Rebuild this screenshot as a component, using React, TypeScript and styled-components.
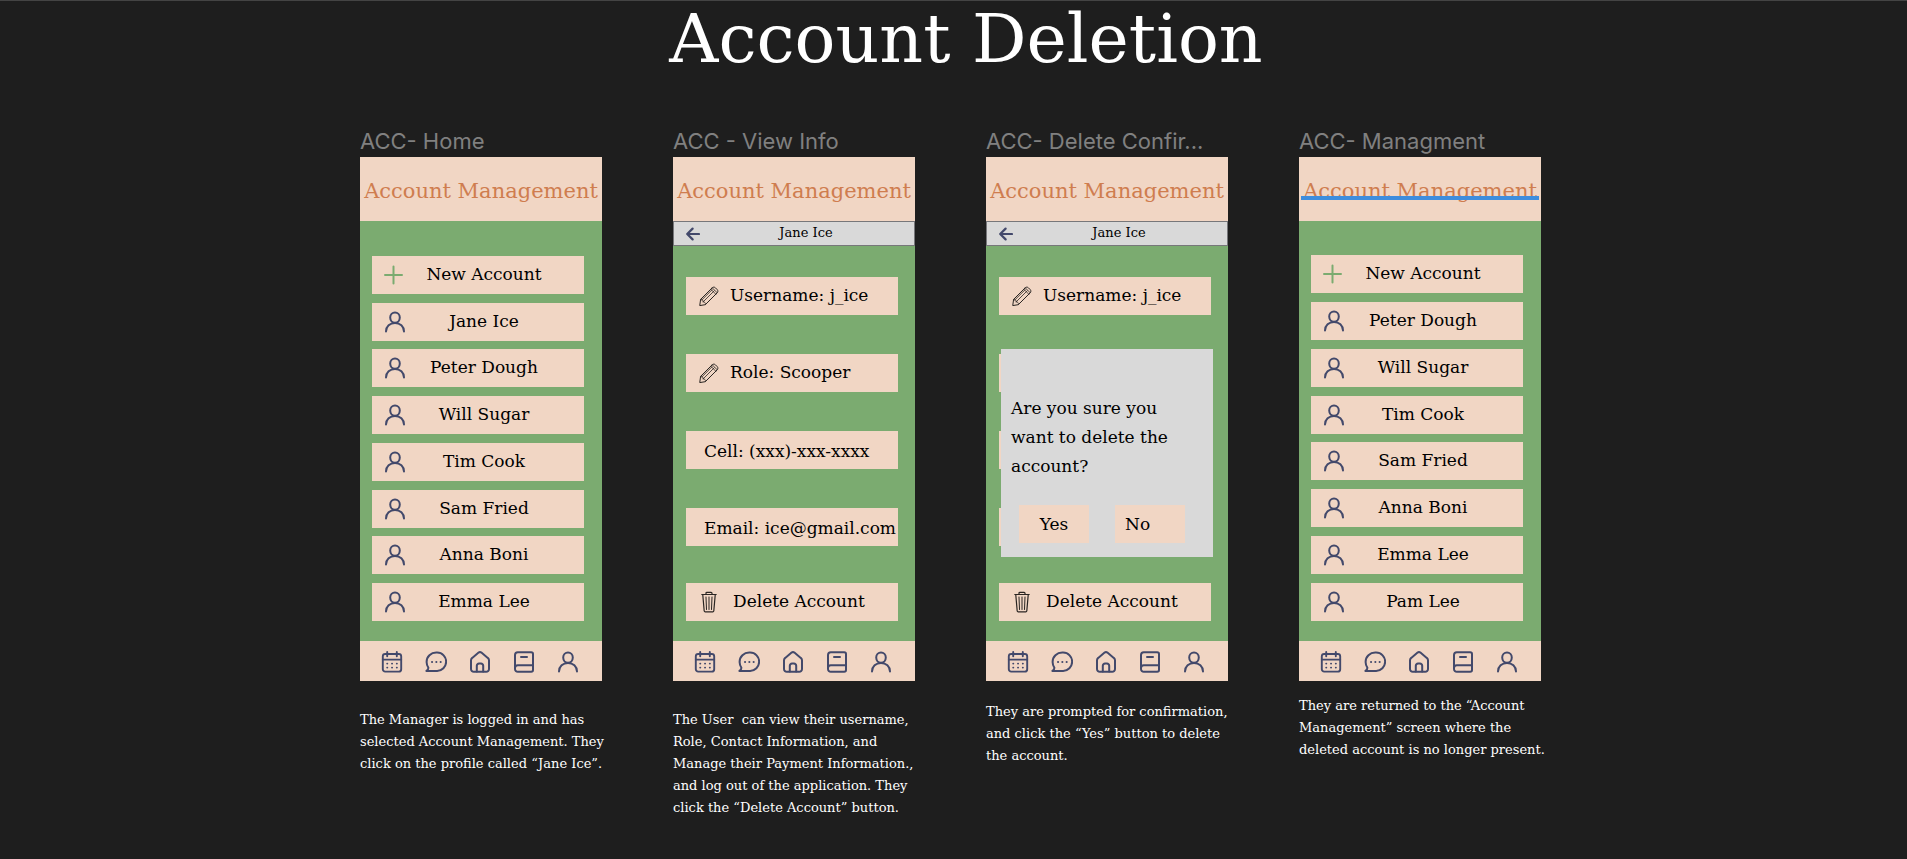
import React from 'react';
import styled, { createGlobalStyle, css } from 'styled-components';

const Global = createGlobalStyle`
  *, *::before, *::after { box-sizing: border-box; }
  body {
    margin: 0;
    background: #1e1e1e;
    color: #fff;
    font-family: 'DejaVu Serif', serif;
  }
  button { font: inherit; color: inherit; border: 0; padding: 0; background: none; cursor: pointer; }
  h1, h2, h3, p { margin: 0; font-weight: 400; }
`;

const peach = '#f1d6c4';
const green = '#7bab70';
const grey = '#d9d9d9';
const navy = '#43496b';

const Page = styled.main`
  min-height: 100vh;
  border-top: 1px solid #444;
  display: flex;
  flex-direction: column;
  align-items: center;
  overflow: hidden;
`;

const Title = styled.h1`
  padding-left: 25px;
  font-size: 68px;
  line-height: 76px;
  white-space: nowrap;
`;

const Board = styled.div`
  display: grid;
  grid-template-columns: repeat(4, 242px);
  gap: 71px;
  margin-top: 52px;
  padding: 0 6px 24px 0;
`;

const Flow = styled.section`
  display: flex;
  flex-direction: column;
  min-width: 0;
`;

const FrameLabel = styled.h2`
  margin-bottom: 4px;
  font-family: Inter, sans-serif;
  font-size: 22px;
  line-height: 24px;
  color: #808080;
  white-space: nowrap;
`;

const Phone = styled.article`
  display: flex;
  flex-direction: column;
  height: 524px;
  background: ${green};
  color: #000;
`;

const Header = styled.header`
  display: flex;
  align-items: center;
  justify-content: center;
  flex: none;
  height: 64px;
  background: ${peach};
`;

const HeaderText = styled.h3<{ $marked?: boolean }>`
  position: relative;
  font-size: 21px;
  line-height: 28px;
  padding-top: 4px;
  white-space: nowrap;
  color: #cf7d4f;
  ${p => p.$marked && css`
    &::after {
      content: '';
      position: absolute;
      inset: auto -2px 5px -2px;
      height: 4px;
      background: #3e8ddd;
    }
  `}
`;

const BackBar = styled.div`
  display: grid;
  grid-template-columns: 24px 1fr;
  align-items: center;
  flex: none;
  height: 25px;
  padding: 0 12px;
  border: 1px solid #77777a;
  background: ${grey};
  font-size: 13px;
  line-height: 16px;
  text-align: center;
  svg { display: block; }
`;

const BarName = styled.span`
  padding-bottom: 2px;
`;

const Accounts = styled.div<{ $top: number }>`
  flex: 1;
  display: flex;
  flex-direction: column;
  justify-content: space-between;
  padding: ${p => p.$top}px 18px 20px 12px;
`;

const AccountRow = styled.button`
  && {
    display: grid;
    grid-template-columns: 46px 1fr;
    align-items: center;
    justify-items: center;
    height: 38px;
    padding-right: 34px;
    background: ${peach};
    font-size: 17px;
    line-height: 24px;
    white-space: nowrap;
  }
`;

const RowText = styled.span`
  padding-bottom: 2px;
`;

const Details = styled.div`
  position: relative;
  flex: 1;
  display: flex;
  flex-direction: column;
  padding: 31px 17px 20px 13px;
`;

const Fields = styled.div`
  display: flex;
  flex-direction: column;
  gap: 39px;
`;

const fieldBox = css`
  display: flex;
  align-items: center;
  height: 38px;
  background: ${peach};
  font-size: 17px;
  line-height: 24px;
  white-space: nowrap;
`;

const Field = styled.div<{ $plain?: boolean }>`
  ${fieldBox}
  gap: 11px;
  padding: ${p => (p.$plain ? '2px 0 0 18px' : '0 0 0 13px')};
`;

const DeleteRow = styled.button`
  && {
    ${fieldBox}
    gap: 16px;
    margin-top: auto;
    padding-left: 15px;
  }
`;

const Dialog = styled.div`
  position: absolute;
  top: 103px;
  left: 15px;
  width: 212px;
  height: 208px;
  display: flex;
  flex-direction: column;
  justify-content: flex-end;
  padding: 0 18px 14px 10px;
  background: ${grey};
  font-size: 17px;
  line-height: 29px;
`;

const Question = styled.p`
  white-space: pre;
`;

const Choices = styled.div`
  display: flex;
  gap: 26px;
  margin-top: 24px;
  padding-left: 8px;
`;

const Choice = styled.button<{ $start?: boolean }>`
  && {
    width: 70px;
    height: 38px;
    padding: 0 10px;
    background: ${peach};
    text-align: ${p => (p.$start ? 'left' : 'center')};
  }
`;

const Nav = styled.nav`
  display: flex;
  align-items: center;
  gap: 22px;
  flex: none;
  height: 40px;
  padding: 2px 0 0 21px;
  background: ${peach};
`;

const NavButton = styled.button`
  svg { display: block; }
`;

const Caption = styled.p<{ $top: number }>`
  margin-top: ${p => p.$top}px;
  font-size: 13px;
  line-height: 22px;
  white-space: pre;
`;

const Glyph = ({ children, w = 22, h = 22, box = '0 0 22 22', color = navy, stroke = 2 }: {
  children: React.ReactNode; w?: number; h?: number; box?: string; color?: string; stroke?: number;
}) => (
  <svg width={w} height={h} viewBox={box} fill="none" stroke={color} strokeWidth={stroke}
    strokeLinecap="round" strokeLinejoin="round" aria-hidden="true">
    {children}
  </svg>
);

const Person = () => (
  <Glyph>
    <ellipse cx="11" cy="6.6" rx="4.8" ry="5.2" />
    <path d="M2 20.6C2 15.400 6 12 11 12s9 3.400 9 8.600" />
  </Glyph>
);
const Plus = () => (
  <Glyph color="#7bab70"><path d="M8.500 2.500v17M0 11h17" transform="translate(1 0)" /></Glyph>
);
const Calendar = () => (
  <Glyph stroke={1.9}>
    <rect x="1.8" y="3" width="18.4" height="17.600" rx="2.4" />
    <path d="M1.800 8.600h18.400M6.200 1v4.200M15.800 1v4.200" />
    <path d="M6.200 12.600h.1M11 12.600h.1M15.800 12.600h.1M6.200 16.600h.1M11 16.600h.1M15.800 16.600h.1" />
  </Glyph>
);
const Chat = () => (
  <Glyph>
    <path d="M11.300 1.600h.8a9 9 0 0 1 9 9.400 9.200 9.200 0 0 1-9 9H1.400c1.400-.7 2-1.600 2-3.200C2.200 15 1.600 13 1.600 11c0-5.400 4.300-9.400 9.700-9.400z" />
    <path d="M7 11h.1M11.300 11h.1M15.600 11h.1" />
  </Glyph>
);
const Home = () => (
  <Glyph>
    <path d="M2 9.200c0-1 .4-1.700 1.200-2.300L9.600 1.600c.9-.7 1.900-.7 2.800 0l6.400 5.300c.8.600 1.200 1.300 1.200 2.300v8.800a2.800 2.800 0 0 1-2.800 2.800H4.800A2.800 2.800 0 0 1 2 18z" />
    <path d="M7.800 20.600v-5.800a2.200 2.200 0 0 1 2.200-2.200h2a2.200 2.200 0 0 1 2.200 2.200v5.800" />
  </Glyph>
);
const Book = () => (
  <Glyph>
    <path d="M2 18V4a2.800 2.800 0 0 1 2.800-2.800h13.400A1.800 1.800 0 0 1 20 3v16a1.800 1.800 0 0 1-1.800 1.800H4.800A2.800 2.800 0 0 1 2 18zM2 17a2.800 2.800 0 0 1 2.800-2.800H20" />
    <path d="M8 6h6" />
  </Glyph>
);
const Arrow = () => (
  <Glyph w={14} h={14} box="0 0 14 14" stroke={2.2}><path d="M13 7H1.200M6.600 1.600L1.200 7l5.400 5.400" /></Glyph>
);
const Pencil = () => (
  <Glyph w={20} h={20} box="0 0 20 20" color="#2a2522" stroke={1}>
    <path d="M.8 19.200l.8-5.800L13.200 1.800c.9-.9 2.300-.9 3.200 0l1.800 1.800c.9.900.9 2.300 0 3.200L6.600 18.400z" />
    <path d="M1.600 13.400c1.600-.1 2.500.6 2.500 2.500 1.700 0 2.500.9 2.500 2.500M4.100 15.900L15.200 4.800M11.800 3.200l5 5M13.200 1.800l5 5M2.600 14.200L13 3.800" strokeWidth=".8" />
  </Glyph>
);
const Trash = () => (
  <Glyph w={16} h={22} box="0 0 16 22" color="#2a2522" stroke={1}>
    <path d="M.8 3.500h14.400M5 3.500V2.200c0-.6.3-.9.9-.9h4.200c.6 0 .9.300.9.900v1.300M1.800 4l1.400 16c.1.600.4.900 1 .9h7.600c.6 0 .9-.3 1-.9L14.200 4" strokeWidth="1.200" />
    <path d="M5 6l.5 12.500M8 6v12.500M11 6l-.5 12.500" />
  </Glyph>
);

const navItems: [string, () => React.ReactElement][] = [
  ['Calendar', Calendar], ['Messages', Chat], ['Home', Home], ['Handbook', Book], ['Profile', Person],
];

const BottomNav = () => (
  <Nav aria-label="Main">
    {navItems.map(([name, Icon]) => (
      <NavButton key={name} type="button" aria-label={name}><Icon /></NavButton>
    ))}
  </Nav>
);

const AccountList = ({ names, top, marked }: { names: string[]; top: number; marked?: boolean }) => (
  <Phone>
    <Header><HeaderText $marked={marked}>Account Management</HeaderText></Header>
    <Accounts $top={top}>
      <AccountRow type="button"><Plus /><RowText>New Account</RowText></AccountRow>
      {names.map(n => (
        <AccountRow key={n} type="button"><Person /><RowText>{n}</RowText></AccountRow>
      ))}
    </Accounts>
    <BottomNav />
  </Phone>
);

const AccountDetails = ({ confirming }: { confirming?: boolean }) => (
  <Phone>
    <Header><HeaderText>Account Management</HeaderText></Header>
    <BackBar>
      <NavButton type="button" aria-label="Back"><Arrow /></NavButton>
      <BarName>Jane Ice</BarName>
    </BackBar>
    <Details>
      <Fields>
        <Field><Pencil /><RowText>Username: j_ice</RowText></Field>
        <Field>{!confirming && <><Pencil /><RowText>Role: Scooper</RowText></>}</Field>
        <Field $plain>{!confirming && 'Cell: (xxx)-xxx-xxxx'}</Field>
        <Field $plain>{!confirming && 'Email: ice@gmail.com'}</Field>
      </Fields>
      <DeleteRow type="button"><Trash /><RowText>Delete Account</RowText></DeleteRow>
      {confirming && (
        <Dialog role="dialog" aria-label="Confirm deletion">
          <Question>{'Are you sure you\nwant to delete the\naccount?'}</Question>
          <Choices>
            <Choice type="button">Yes</Choice>
            <Choice type="button" $start>No</Choice>
          </Choices>
        </Dialog>
      )}
    </Details>
    <BottomNav />
  </Phone>
);

const people = ['Jane Ice', 'Peter Dough', 'Will Sugar', 'Tim Cook', 'Sam Fried', 'Anna Boni', 'Emma Lee'];

export default function App() {
  return (
    <>
      <Global />
      <Page>
        <Title>Account Deletion</Title>
        <Board>
          <Flow>
            <FrameLabel>ACC- Home</FrameLabel>
            <AccountList names={people} top={35} />
            <Caption $top={28}>{'The Manager is logged in and has\nselected Account Management. They\nclick on the profile called “Jane Ice”.'}</Caption>
          </Flow>
          <Flow>
            <FrameLabel>ACC - View Info</FrameLabel>
            <AccountDetails />
            <Caption $top={28}>{'The User  can view their username,\nRole, Contact Information, and\nManage their Payment Information.,\nand log out of the application. They\nclick the “Delete Account” button.'}</Caption>
          </Flow>
          <Flow>
            <FrameLabel>ACC- Delete Confir...</FrameLabel>
            <AccountDetails confirming />
            <Caption $top={20}>{'They are prompted for confirmation,\nand click the “Yes” button to delete\nthe account.'}</Caption>
          </Flow>
          <Flow>
            <FrameLabel>ACC- Managment</FrameLabel>
            <AccountList names={[...people.slice(1), 'Pam Lee']} top={34} marked />
            <Caption $top={14}>{'They are returned to the “Account\nManagement” screen where the\ndeleted account is no longer present.'}</Caption>
          </Flow>
        </Board>
      </Page>
    </>
  );
}
